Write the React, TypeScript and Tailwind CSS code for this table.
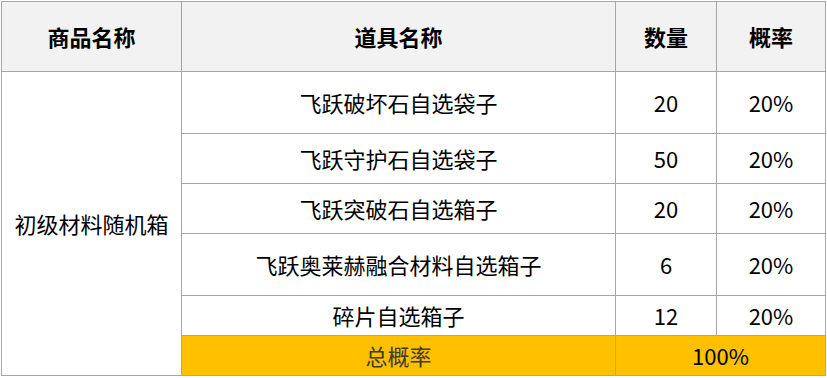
const rows = [
  { name: "飞跃破坏石自选袋子", qty: "20", rate: "20%", h: "row-start-2" },
  { name: "飞跃守护石自选袋子", qty: "50", rate: "20%", h: "row-start-3" },
  { name: "飞跃突破石自选箱子", qty: "20", rate: "20%", h: "row-start-4" },
  { name: "飞跃奥莱赫融合材料自选箱子", qty: "6", rate: "20%", h: "row-start-5" },
  { name: "碎片自选箱子", qty: "12", rate: "20%", h: "row-start-6" },
];

const cell = "flex items-center justify-center bg-white";

const App = () => {
  return (
    <div className="w-[827px] h-[378px] bg-white pl-px pt-px font-['Noto_Sans_CJK_SC',sans-serif] text-[22px] text-black">
      <div className="grid w-[825px] grid-cols-[179px_433px_100px_108px] grid-rows-[69px_61px_49px_49px_61px_39px_39px] gap-px bg-[#a6a6a6] p-px">
        {/* header */}
        <div className="flex items-center justify-center bg-[#f2f2f2] font-bold">商品名称</div>
        <div className="flex items-center justify-center bg-[#f2f2f2] font-bold">道具名称</div>
        <div className="flex items-center justify-center bg-[#f2f2f2] font-bold">数量</div>
        <div className="flex items-center justify-center bg-[#f2f2f2] font-bold">概率</div>

        {/* merged product name */}
        <div className={`${cell} col-start-1 row-start-2 row-end-8`}>初级材料随机箱</div>

        {rows.map((r) => (
          <div key={r.name} className="contents">
            <div className={`${cell} col-start-2 ${r.h}`}>{r.name}</div>
            <div className={`${cell} col-start-3 ${r.h}`}>{r.qty}</div>
            <div className={`${cell} col-start-4 ${r.h}`}>{r.rate}</div>
          </div>
        ))}

        {/* total */}
        <div className="col-start-2 row-start-7 flex items-center justify-center bg-[#ffc000] text-[#3f3a26]">总概率</div>
        <div className="col-start-3 col-end-5 row-start-7 flex items-center justify-center bg-[#ffc000]">100%</div>
      </div>
    </div>
  );
};

export default App;
